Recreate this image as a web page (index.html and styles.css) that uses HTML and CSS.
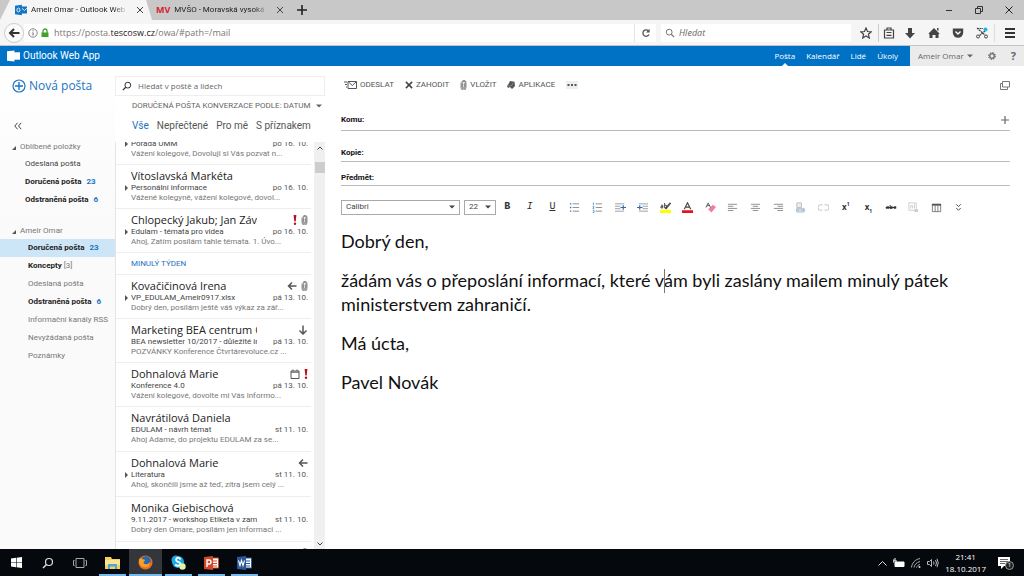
FILE: index.html
```html
<!DOCTYPE html>
<html lang="cs">
<head>
<meta charset="utf-8">
<title>Ameir Omar - Outlook Web App</title>
<link rel="stylesheet" href="styles.css">
</head>
<body>
<svg class="defs" aria-hidden="true">
  <symbol id="outlook" viewBox="0 0 14 12"><path d="M7 2h7v8H7z" fill="currentColor"/><path d="M8 4l3 2.500L14 4" class="cut" fill="none"/><path d="M0 1l8-1v12l-8-1z" fill="currentColor"/><ellipse cx="4" cy="6" rx="1.800" ry="2.300" class="cut" fill="none"/></symbol>
  <symbol id="clip" viewBox="0 0 8 12"><path d="M2 4v4.500a2 2 0 0 0 4 0V3a1.500 1.500 0 0 0-3 0v5.300a1 1 0 0 0 2 0V4M1 3v6a3 3 0 0 0 6 0V3a2.500 2.500 0 0 0-5 0" fill="none" stroke="currentColor" stroke-width=".8"/></symbol>
  <symbol id="reply" viewBox="0 0 10 10"><path d="M9.500 5H1.500M5 1.500L1.500 5 5 8.500" fill="none" stroke="currentColor" stroke-width="1.500"/></symbol>
  <symbol id="down" viewBox="0 0 10 10"><path d="M5 .5v8M1.500 5.500L5 9l3.500-3.500" fill="none" stroke="currentColor" stroke-width="1.500"/></symbol>
  <symbol id="bang" viewBox="0 0 4 10"><path d="M.6 0h2.800L2.700 6.500H1.300z" fill="#b8101c"/><circle cx="2" cy="8.700" r="1.200" fill="#b8101c"/></symbol>
  <symbol id="cal" viewBox="0 0 10 10"><path d="M1 2h8v7.500H1zM1 3.200h8M3 .5V2M7 .5V2" fill="none" stroke="currentColor"/></symbol>
  <symbol id="caret" viewBox="0 0 6 4"><path d="M0 .5h6L3 3.500z" fill="currentColor"/></symbol>
  <symbol id="lens" viewBox="0 0 12 12"><circle cx="7" cy="5" r="3.500" fill="none" stroke="currentColor" stroke-width="1.200"/><path d="M4.500 7.500L1 11" stroke="currentColor" stroke-width="1.500"/></symbol>
  <symbol id="close" viewBox="0 0 10 10"><path d="M2 2l6 6M8 2L2 8" stroke="currentColor" fill="none"/></symbol>
</svg>

<div class="tabs">
  <div class="tab tab--active">
    <svg class="tab-icon" width="12" height="12"><use href="#outlook"/></svg>
    <span class="tab-title">Ameir Omar - Outlook Web App</span>
    <button class="tab-close" aria-label="Zavřít panel"><svg width="10" height="10"><use href="#close"/></svg></button>
  </div>
  <div class="tab">
    <b class="mv">MV</b>
    <span class="tab-title">MVŠO - Moravská vysoká škola</span>
    <button class="tab-close" aria-label="Zavřít panel"><svg width="10" height="10"><use href="#close"/></svg></button>
  </div>
  <button class="new-tab" aria-label="Nový panel"><svg width="10" height="10" viewBox="0 0 10 10"><path d="M5 0v10M0 5h10" stroke="#222" stroke-width="1.600"/></svg></button>
  <div class="win">
    <button aria-label="Minimalizovat"><svg width="10" height="10" viewBox="0 0 10 10"><path d="M2 5.500h6" stroke="#333"/></svg></button>
    <button aria-label="Obnovit"><svg width="10" height="10" viewBox="0 0 10 10"><path d="M1.500 3.500h5v5h-5zM3.500 3.500v-2h5v5h-2" fill="none" stroke="#333"/></svg></button>
    <button aria-label="Zavřít"><svg width="10" height="10" viewBox="0 0 10 10"><path d="M1.500 1.500l7 7M8.500 1.500l-7 7" stroke="#222"/></svg></button>
  </div>
</div>

<div class="nav">
  <button class="back" aria-label="Zpět"><svg width="12" height="10" viewBox="0 0 12 10"><path d="M11.500 5H2M6 1L2 5l4 4" fill="none" stroke="#333" stroke-width="2"/></svg></button>
  <div class="address">
    <svg width="10" height="10" viewBox="0 0 10 10"><circle cx="5" cy="5" r="4.200" fill="none" stroke="#666" stroke-width=".8"/><path d="M5 4.300v3.200M5 2.300v1" stroke="#666"/></svg>
    <svg width="8" height="10" viewBox="0 0 8 10"><path d="M.5 4.500h7V9h-7z" fill="#3fa32a"/><path d="M2 5V3a2 2 0 0 1 4 0v2" fill="none" stroke="#3fa32a" stroke-width="1.300"/></svg>
    <span class="url">https://posta.<b>tescosw.cz</b>/owa/#path=/mail</span>
    <button class="reload" aria-label="Obnovit stránku"><svg width="10" height="10" viewBox="0 0 10 10"><path d="M8 6.500A3.200 3.200 0 1 1 7.500 3" fill="none" stroke="#555" stroke-width="1.300"/><path d="M8.600.8v3.600H5z" fill="#555"/></svg></button>
  </div>
  <label class="find"><svg class="flip" width="10" height="10"><use href="#lens"/></svg><input type="text" placeholder="Hledat" aria-label="Hledat na webu"></label>
  <div class="nav-tools">
    <button aria-label="Záložka"><svg width="12" height="12" viewBox="0 0 12 12"><path d="M6 1l1.500 3.500 3.700.3-2.800 2.500.9 3.700L6 9l-3.300 2 .9-3.700L.8 4.800l3.700-.3z" fill="none" stroke="#444" stroke-width="1.200"/></svg></button>
    <button class="ruled" aria-label="Seznam"><svg width="12" height="12" viewBox="0 0 12 12"><path d="M1.500 3h9v8h-9zM4 3V1h4v2M3.500 5.500h5M3.500 8.300h5" fill="none" stroke="#444" stroke-width="1.200"/></svg></button>
    <button aria-label="Stahování"><svg width="12" height="12" viewBox="0 0 12 12"><path d="M4 1h4v5h3l-5 5.500L1 6h3z" fill="#444"/></svg></button>
    <button aria-label="Domů"><svg width="12" height="12" viewBox="0 0 12 12"><path d="M6 1l5.500 5.500-1 1V11h-3V8h-3v3h-3V7.500l-1-1zM9 1h1.500v3L9 3z" fill="#444"/></svg></button>
    <button aria-label="Pocket"><svg width="12" height="12" viewBox="0 0 12 12"><path d="M.8 1.500h10.400v4a5.200 5.200 0 0 1-10.400 0z" fill="#444"/><path d="M3.500 4.500L6 7l2.500-2.500" fill="none" stroke="#fff" stroke-width="1.400"/></svg></button>
    <button aria-label="Výstřižek"><svg width="12" height="12" viewBox="0 0 12 12"><path d="M1 1.500h6M1 1l8 7M9 4L3 9" stroke="#444" stroke-width="1.200" stroke-dasharray="2 .6" fill="none"/><circle cx="2" cy="9.500" r="1.500" fill="none" stroke="#444"/><circle cx="10" cy="9.500" r="1.500" fill="none" stroke="#444"/><circle cx="9.500" cy="2.500" r="2" fill="#13bbe0"/></svg></button>
    <button class="menu" aria-label="Nabídka"><svg width="12" height="12" viewBox="0 0 12 12"><path d="M1 2h10M1 6h10M1 10h10" stroke="#333" stroke-width="2"/></svg></button>
  </div>
</div>

<header class="owa">
  <div class="brand"><svg width="13" height="12"><use href="#outlook"/></svg>Outlook Web App</div>
  <nav class="modules">
    <a href="#mail" class="current">Pošta</a><a href="#calendar">Kalendář</a><a href="#people">Lidé</a><a href="#tasks">Úkoly</a>
  </nav>
  <div class="account">
    <button>Ameir Omar <svg width="6" height="4"><use href="#caret"/></svg></button>
    <button aria-label="Nastavení"><svg width="10" height="10" viewBox="0 0 10 10"><circle cx="5" cy="5" r="2.300" fill="none" stroke="#666" stroke-width="1.300"/><circle cx="5" cy="5" r="3.500" fill="none" stroke="#666" stroke-width="1" stroke-dasharray="1.400 1.350"/></svg></button>
    <button class="help" aria-label="Nápověda">?</button>
  </div>
</header>

<main class="main">
  <aside class="side">
    <button class="new"><svg width="14" height="14" viewBox="0 0 14 14"><path d="M7 3v8M3 7h8" stroke="currentColor" stroke-width="1.400"/><circle cx="7" cy="7" r="6" fill="none" stroke="currentColor" stroke-width="1.200"/></svg>Nová pošta</button>
    <button class="collapse" aria-label="Sbalit"><svg width="8" height="8" viewBox="0 0 8 8"><path d="M3.500.8L.8 4l2.700 3.200M7.200.8L4.500 4l2.700 3.200" fill="none" stroke="#444"/></svg></button>
    <section class="folders">
      <h2>Oblíbené položky</h2>
      <a href="#sent" class="dark">Odeslaná pošta</a>
      <a href="#inbox" class="bold">Doručená pošta <i>23</i></a>
      <a href="#deleted" class="bold">Odstraněná pošta <i>6</i></a>
    </section>
    <section class="folders folders--own">
      <h2>Ameir Omar</h2>
      <a href="#inbox" class="bold selected">Doručená pošta <i>23</i></a>
      <a href="#drafts" class="bold">Koncepty <em>[3]</em></a>
      <a href="#sent">Odeslaná pošta</a>
      <a href="#deleted" class="bold">Odstraněná pošta <i>6</i></a>
      <a href="#rss">Informační kanály RSS</a>
      <a href="#junk">Nevyžádaná pošta</a>
      <a href="#notes">Poznámky</a>
    </section>
  </aside>

  <section class="list">
    <label class="search"><svg width="10" height="10"><use href="#lens"/></svg><input type="text" placeholder="Hledat v poště a lidech" aria-label="Hledat v poště a lidech"></label>
    <button class="sort">DORUČENÁ POŠTA KONVERZACE PODLE: DATUM <svg width="6" height="4"><use href="#caret"/></svg></button>
    <div class="filters"><button class="on">Vše</button><button>Nepřečtené</button><button>Pro mě</button><button>S příznakem</button></div>
    <div class="scroller">
      <div class="items">
        <article class="item item--first thread"><p class="subject">Porada ÚMM</p><time>po 16. 10.</time><p class="preview">Vážení kolegové, Dovoluji si Vás pozvat n...</p></article>
        <article class="item thread"><h3>Vítoslavská Markéta</h3><p class="subject">Personální informace</p><time>po 16. 10.</time><p class="preview">Vážené kolegyně, vážení kolegové, dovol...</p></article>
        <article class="item thread"><h3>Chlopecký Jakub; Jan Závodný</h3><span class="flags"><svg width="4" height="10"><use href="#bang"/></svg><svg width="7" height="10"><use href="#clip"/></svg></span><p class="subject">Edulam - témata pro videa</p><time>po 16. 10.</time><p class="preview">Ahoj, Zatím posílám tahle témata. 1. Úvo...</p></article>
        <h4 class="group">MINULÝ TÝDEN</h4>
        <article class="item thread"><h3>Kovačičinová Irena</h3><span class="flags"><svg width="10" height="10"><use href="#reply"/></svg><svg width="7" height="10"><use href="#clip"/></svg></span><p class="subject">VP_EDULAM_Ameir0917.xlsx</p><time>pá 13. 10.</time><p class="preview">Dobrý den, posílám ještě váš výkaz za zář...</p></article>
        <article class="item"><h3>Marketing BEA centrum Olomouc</h3><span class="flags"><svg width="10" height="10"><use href="#down"/></svg></span><p class="subject">BEA newsletter 10/2017 - důležité informace</p><time>pá 13. 10.</time><p class="preview">POZVÁNKY Konference Čtvrtárevoluce.cz ...</p></article>
        <article class="item"><h3>Dohnalová Marie</h3><span class="flags"><svg width="10" height="10"><use href="#cal"/></svg><svg width="4" height="10"><use href="#bang"/></svg></span><p class="subject">Konference 4.0</p><time>pá 13. 10.</time><p class="preview">Vážení kolegové, dovolte mi Vás informo...</p></article>
        <article class="item tall"><h3>Navrátilová Daniela</h3><p class="subject">EDULAM - návrh témat</p><time>st 11. 10.</time><p class="preview">Ahoj Adame, do projektu EDULAM za se...</p></article>
        <article class="item tall thread"><h3>Dohnalová Marie</h3><span class="flags"><svg width="10" height="10"><use href="#reply"/></svg></span><p class="subject">Literatura</p><time>st 11. 10.</time><p class="preview">Ahoj, skončili jsme až teď, zítra jsem celý ...</p></article>
        <article class="item tall"><h3>Monika Giebischová</h3><p class="subject">9.11.2017 - workshop Etiketa v zaměstnání</p><time>st 11. 10.</time><p class="preview">Dobrý den Omare, posílám jen informaci ...</p></article>
        <article class="item"><span class="flags"><svg width="10" height="10"><use href="#reply"/></svg><svg width="7" height="10"><use href="#clip"/></svg></span></article>
      </div>
      <div class="bar" aria-hidden="true"><svg width="6" height="4" viewBox="0 0 6 4"><path d="M.5 3.500L3 1l2.500 2.500" fill="none" stroke="#444"/></svg><span class="thumb"></span><svg class="bar-down" width="6" height="4" viewBox="0 0 6 4"><path d="M.5.5L3 3 5.500.5" fill="none" stroke="#444"/></svg></div>
    </div>
  </section>

  <section class="compose">
    <div class="actions">
      <button><svg width="13" height="10" viewBox="0 0 13 10"><path d="M4 1.500h8.500v7H4zM4.500 2l3.800 3.500L12 2M0 2h3M1 4.500h2M2 7h1" fill="none" stroke="#555"/></svg>ODESLAT</button>
      <button><svg width="8" height="8" viewBox="0 0 9 9"><path d="M1 1l7 7M8 1L1 8" stroke="#444" stroke-width="1.700"/></svg>ZAHODIT</button>
      <button><svg width="7" height="10"><use href="#clip"/></svg>VLOŽIT</button>
      <button><svg width="8" height="8" viewBox="0 0 8 8"><path d="M3 0l4.500.8L8 5 5 8 3 6 1 7 0 5l1.500-2z" fill="#555"/><path d="M1 5l4-.5L6 2" fill="none" stroke="#aaa" stroke-width=".5"/></svg>APLIKACE</button>
      <button class="more" aria-label="Více"><svg width="10" height="4" viewBox="0 0 10 4"><path d="M.5 1h2v2h-2zM4 1h2v2H4zM7.500 1h2v2h-2z" fill="#555"/></svg></button>
      <button class="popout" aria-label="Otevřít v novém okně"><svg width="10" height="9" viewBox="0 0 10 9"><path d="M2.500.5h7v5.500h-7zM2.500 2.500h-2v6h7V6" fill="none" stroke="#777"/></svg></button>
    </div>
    <div class="field field--to"><label for="to">Komu:</label><input id="to" type="text"><button aria-label="Přidat"><svg width="8" height="8" viewBox="0 0 8 8"><path d="M4 0v8M0 4h8" stroke="#666" stroke-width="1.200"/></svg></button></div>
    <div class="field field--cc"><label for="cc">Kopie:</label><input id="cc" type="text"></div>
    <div class="field field--subj"><label for="subj">Předmět:</label><input id="subj" type="text"></div>
    <div class="format">
      <span class="pick pick--font"><select aria-label="Písmo"><option>Calibri</option></select><svg width="6" height="4"><use href="#caret"/></svg></span>
      <span class="pick pick--size"><select aria-label="Velikost"><option>22</option></select><svg width="6" height="4"><use href="#caret"/></svg></span>
      <div class="tools">
        <button class="slab" aria-label="Tučné"><b>B</b></button>
        <button class="slab" aria-label="Kurzíva"><i>I</i></button>
        <button class="slab" aria-label="Podtržené"><u>U</u></button>
        <button aria-label="Odrážky"><svg viewBox="0 0 12 12"><path d="M4 2h7M4 6h7M4 10h7" stroke="#888"/><path d="M1 2h1.500M1 6h1.500M1 10h1.500" stroke="#2a7cc8" stroke-width="1.500"/></svg></button>
        <button aria-label="Číslování"><svg viewBox="0 0 12 12"><path d="M4 2h7M4 6h7M4 10h7" stroke="#888"/><path d="M1.500.5v3M.8 5h1.400L1 7h1.400M.8 9h1.400v2.500H.8" fill="none" stroke="#2a7cc8" stroke-width=".8"/></svg></button>
        <button aria-label="Zmenšit odsazení"><svg viewBox="0 0 12 12"><path d="M0 2h10M0 4.600h6M0 7.300h6M0 10h10" stroke="#999"/><path d="M6 6h6M9 3.500v5" fill="none" stroke="#2a6cb0" stroke-width="1.300"/></svg></button>
        <button aria-label="Zvětšit odsazení"><svg viewBox="0 0 12 12"><path d="M2 2h10M6 4.600h6M6 7.300h6M2 10h10" stroke="#999"/><path d="M0 6h6M3 3.500v5" fill="none" stroke="#2a6cb0" stroke-width="1.300"/></svg></button>
        <button aria-label="Zvýraznění"><svg viewBox="0 0 12 12"><path d="M0 8.500h12V12H0z" fill="#ff0"/><path d="M11.500 1L6 7.500" stroke="#555" stroke-width="2"/><path d="M1 3.500h2v3H1V5h2M5 1v5.500h2v-3H5" fill="none" stroke="#333" stroke-width=".9"/></svg></button>
        <button aria-label="Barva písma"><svg viewBox="0 0 12 12"><path d="M0 9h12v3H0z" fill="#e8121c"/><path d="M2.500 8L6 .8 9.500 8M4 5.600h4" fill="none" stroke="#444" stroke-width="1.200"/></svg></button>
        <button aria-label="Vymazat formát"><svg viewBox="0 0 12 12"><path d="M3.500 8L8.500 3l3.500 2.500L7 11.500z" fill="#ef7f9b"/><path d="M1 6l2.500-5L6 6M2 4h3" fill="none" stroke="#555"/></svg></button>
        <button aria-label="Vlevo"><svg viewBox="0 0 12 12"><path d="M1 2.500h10M1 4.700h6M1 7h10M1 9.300h6" stroke="#888"/></svg></button>
        <button aria-label="Na střed"><svg viewBox="0 0 12 12"><path d="M1 2.500h10M3 4.700h6M1 7h10M3 9.300h6" stroke="#888"/></svg></button>
        <button aria-label="Vpravo"><svg viewBox="0 0 12 12"><path d="M1 2.500h10M5 4.700h6M1 7h10M5 9.300h6" stroke="#888"/></svg></button>
        <button aria-label="Vložit odkaz"><svg viewBox="0 0 12 12"><path d="M2 1h5v5H2zM2 7h8v4H2z" fill="#eee" stroke="#bbb"/><path d="M1 9h4M6 9h5" stroke="#a5c5e4" stroke-width="2"/></svg></button>
        <button aria-label="Odebrat odkaz"><svg viewBox="0 0 12 12"><path d="M5 3H3a3 3 0 0 0 0 6h2M7 3h2a3 3 0 0 1 0 6H7" fill="none" stroke="#ccc" stroke-width="1.200"/></svg></button>
        <button class="mark" aria-label="Horní index"><span>x<sup>1</sup></span></button>
        <button class="mark" aria-label="Dolní index"><span>x<sub>1</sub></span></button>
        <button class="mark" aria-label="Přeškrtnuté"><s>abc</s></button>
        <button aria-label="Obrázek"><svg viewBox="0 0 12 12"><path d="M1 1h8v8H1zM3 7V4h2v3M7 2v5" fill="none" stroke="#ccc"/><path d="M7 8h4v3H7z" fill="#ccc"/></svg></button>
        <button aria-label="Tabulka"><svg viewBox="0 0 12 12"><path d="M1.500 2.500h9v8h-9zM4.500 4v6.500M7.500 4v6.500" fill="none" stroke="#777"/><path d="M1 2h10v2H1z" fill="#555"/></svg></button>
        <button aria-label="Další"><svg viewBox="0 0 12 12"><path d="M3.500 2.500L6 5l2.500-2.500M3.500 6.500L6 9l2.500-2.500" fill="none" stroke="#444"/></svg></button>
      </div>
    </div>
    <div class="body" role="textbox" aria-multiline="true" aria-label="Text zprávy" contenteditable="true" spellcheck="false">
      <p>Dobrý den,</p>
      <p>žádám vás o přeposlání informací, které v<span class="cursor"></span>ám byli zaslány mailem minulý pátek ministerstvem zahraničí.</p>
      <p>Má úcta,</p>
      <p>Pavel Novák</p>
    </div>
  </section>
</main>

<footer class="taskbar">
  <button aria-label="Start"><svg width="11" height="11" viewBox="0 0 11 11"><path d="M0 1.500L5 .8v4.400H0zM5.600.7L11 0v5.200H5.600zM0 5.800h5v4.400l-5-.7zM5.600 5.800H11V11l-5.400-.7z" fill="#fff"/></svg></button>
  <button aria-label="Hledat"><svg width="12" height="12" color="#ddd"><use href="#lens"/></svg></button>
  <button aria-label="Zobrazení úloh"><svg width="14" height="12" viewBox="0 0 14 12"><path d="M3 1.500h8v9H3zM1.500 3.500h-1v5h1M12.500 3.500h1v5h-1" fill="none" stroke="#aaa"/></svg></button>
  <button class="open" aria-label="Průzkumník"><svg width="15" height="14" viewBox="0 0 15 14"><path d="M0 1h6l1 2h8v10H0z" fill="#f5cf62"/><path d="M0 4h15v5H0z" fill="#fbe394"/><path d="M3 13V8h9v5h-2v-2.500H5V13z" fill="#48a8dc"/></svg></button>
  <button class="open active" aria-label="Firefox"><svg width="15" height="15" viewBox="0 0 15 15"><circle cx="7.500" cy="7.500" r="7" fill="#e8701c"/><circle cx="8" cy="6" r="4.800" fill="#2768b0"/><path d="M1 4c2-2 3 0 5 .5C8 5 6 6.500 5.500 7.500 6 10 10 10 12 7c0 5-4 6-7 5S1 8 1 4z" fill="#f6a024"/></svg></button>
  <button class="open" aria-label="Skype"><svg width="15" height="15" viewBox="0 0 15 15"><circle cx="5" cy="5" r="4.500" fill="#18a8e8"/><circle cx="7" cy="7" r="6" fill="#18a8e8"/><path d="M9.500 4.500C7-.2 2.500 5.500 7 6.800c5.500 1.500.5 5.800-2.800 2.700" fill="none" stroke="#fff" stroke-width="1.800"/><circle cx="11.500" cy="11.500" r="3.200" fill="#e4f2a4"/></svg></button>
  <button class="open" aria-label="PowerPoint"><svg width="15" height="14" viewBox="0 0 15 14"><path d="M7 2h7.500v10H7z" fill="#fff" stroke="#d24726"/><path d="M9 5h4M9 7.500h4M9 10h4" stroke="#d24726"/><path d="M0 1l9-1v14l-9-1z" fill="#d24726"/><path d="M3 11V4h2a2 2 0 0 1 0 4H3" fill="none" stroke="#fff" stroke-width="1.400"/></svg></button>
  <button class="open" aria-label="Word"><svg width="15" height="14" viewBox="0 0 15 14"><path d="M7 2h7.500v10H7z" fill="#fff" stroke="#2b579a"/><path d="M9 5h4M9 7.500h4M9 10h4" stroke="#2b579a"/><path d="M0 1l9-1v14l-9-1z" fill="#2b579a"/><path d="M1.500 4.500l1.500 5 1.500-5 1.500 5 1.500-5" fill="none" stroke="#fff" stroke-width="1.100"/></svg></button>
  <div class="tray">
    <svg width="9" height="6" viewBox="0 0 9 6"><path d="M.5 5.500l4-4 4 4" fill="none" stroke="#ddd"/></svg>
    <svg width="12" height="10" viewBox="0 0 12 10"><path d="M2 4h9v4.500H2zM0 1v4M2 0v3M0 3h4" fill="#fff" stroke="#fff"/></svg>
    <svg width="10" height="10" viewBox="0 0 10 10"><path d="M.5 9.500C1 5 4 1.500 9 .5M3 9.500C3.500 6.500 5.500 4.500 9 3.500M5.500 9.500C6 8 7 7 9 6.500" fill="none" stroke="#aaa"/><circle cx="8.500" cy="9" r="1" fill="#ddd"/></svg>
    <svg width="12" height="10" viewBox="0 0 12 10"><path d="M.5 3.500h2l2-2v7l-2-2h-2zM6.500 3.500q1 1.500 0 3M8.500 2q2 3 0 6M10 .8q2.500 4.200 0 8.400" fill="none" stroke="#ccc" stroke-width=".9"/></svg>
    <div class="clock"><span>21:41</span><span>18.10.2017</span></div>
    <div class="notice"><svg width="13" height="12" viewBox="0 0 13 12"><path d="M0 0h12v9H6l-3 3V9H0z" fill="#fff"/><path d="M2 2.500h8M2 4.500h8M2 6.500h5" stroke="#444" stroke-width=".8"/></svg><span class="badge">1</span></div>
  </div>
</footer>
</body>
</html>
```
FILE: styles.css
```css
* { box-sizing: border-box; }
body { margin: 0; height: 100vh; display: flex; flex-direction: column; overflow: hidden; background: #fff; color: #333; font: 8px/12px Roboto, "Open Sans", sans-serif; }
button, input, select { font: inherit; color: inherit; background: none; border: 0; padding: 0; margin: 0; min-width: 0; outline: 0; }
button { display: inline-flex; align-items: center; justify-content: center; white-space: nowrap; }
a { color: inherit; text-decoration: none; }
h2, h3, h4, p { margin: 0; font-weight: 400; }
svg { flex: none; display: block; }
.defs { position: absolute; width: 0; height: 0; }

.tabs { display: flex; align-items: center; height: 20px; flex: none; background: #c8c8c8; color: #222; }
.tab { display: flex; align-items: center; height: 20px; width: 140px; padding-left: 4px; }
.tab--active { width: 152px; padding-left: 15px; background: #f5f5f5; clip-path: polygon(10px 0, 146px 0, 152px 100%, 0 100%); }
.tab-icon { color: #1474c4; margin-right: 4px; }
.cut { stroke: #fff; stroke-width: 1; }
.brand .cut { stroke: #0072c6; }
.tab-title { flex: 1; overflow: hidden; white-space: nowrap; mask-image: linear-gradient(to right, #000 85%, transparent); }
.tab-close { width: 24px; color: #444; }
.mv { color: #d8222e; font: 700 9px/12px "Open Sans", sans-serif; margin-right: 4px; }
.new-tab { width: 20px; height: 20px; }
.win { margin-left: auto; display: flex; }
.win button { width: 30px; height: 20px; }

.nav { display: flex; align-items: center; height: 26px; flex: none; background: #f5f5f5; border-bottom: 1px solid #c4c4c4; padding-left: 4px; }
.back { width: 20px; height: 20px; border: 1px solid #ccc; border-radius: 50%; background: #fbfbfb; }
.address { flex: 1; display: flex; align-items: center; gap: 3px; height: 18px; padding-left: 4px; background: #fff; }
.url { font: 9px/12px "Open Sans", sans-serif; color: #777; margin-left: 2px; }
.url b { color: #222; font-weight: 500; }
.reload { margin-left: auto; width: 22px; height: 18px; border-left: 1px solid #e4e4e4; }
.find { display: flex; align-items: center; gap: 4px; width: 190px; height: 18px; margin-left: 5px; padding-left: 4px; background: #fff; color: #777; }
.find input { flex: 1; font: italic 9px/12px "Open Sans", sans-serif; }
.find input::placeholder, .search input::placeholder { color: #666; opacity: 1; }
.flip { transform: scaleX(-1); }
.nav-tools { display: flex; padding-left: 3px; }
.nav-tools button { width: 24px; height: 18px; }
.nav-tools .ruled { width: 20px; border-left: 1px solid #ccc; }
.nav-tools .menu { width: 30px; border-left: 1px solid #ddd; }

.owa { display: flex; align-items: stretch; height: 20px; flex: none; background: #0072c6; color: #fff; font-family: "Open Sans", sans-serif; }
.brand { display: flex; align-items: center; gap: 3px; padding-left: 7px; font: 10px/12px Roboto, sans-serif; }
.modules { margin-left: auto; display: flex; align-items: center; gap: 11px; padding-right: 12px; }
.current { position: relative; }
.current::after { content: ""; position: absolute; left: 50%; bottom: -4px; margin-left: -3px; border: 3px solid transparent; border-top: 0; border-bottom-color: #fff; }
.account { display: flex; align-items: center; gap: 14px; width: 114px; padding-left: 8px; background: #ebebeb; color: #666; }
.account button { gap: 3px; }
.account .help { font-size: 11px; font-weight: 700; }

.main { flex: 1; min-height: 0; display: flex; }
.side { width: 115px; flex: none; background: linear-gradient(#fff, #fafafa 150px); padding-top: 10px; }
.new { gap: 3px; height: 20px; margin-left: 12px; font: 12px/20px "Open Sans", sans-serif; color: #1b74c0; }
.collapse { display: flex; width: 10px; height: 10px; margin: 24px 0 7px 13px; }
.folders h2 { position: relative; padding-left: 20px; font-size: 8px; line-height: 17px; color: #777; }
.folders h2::before { content: ""; position: absolute; left: 12px; top: 8px; border-left: 4px solid transparent; border-bottom: 4px solid #555; }
.folders a { display: block; height: 18px; line-height: 18px; padding-left: 25px; white-space: nowrap; color: #777; }
.folders--own { margin-top: 13px; }
.folders--own a { padding-left: 28px; }
.folders .dark { color: #444; }
.folders .bold { color: #222; font-weight: 700; }
.folders .selected { background: #cde6f7; }
.folders i { font-style: normal; color: #1b74c0; margin-left: 3px; }
.folders em { font-style: normal; font-weight: 400; color: #777; }

.list { width: 210px; flex: none; display: flex; flex-direction: column; padding-top: 10px; }
.search { display: flex; align-items: center; gap: 6px; height: 20px; padding-left: 6px; border: 1px solid #eee; }
.search input { flex: 1; font: 8px/12px "Open Sans", sans-serif; }
.sort { height: 20px; gap: 6px; justify-content: flex-start; padding-left: 17px; color: #666; }
.filters { display: flex; gap: 8px; height: 26px; padding: 0 0 6px 17px; font-size: 10px; color: #555; align-items: center; white-space: nowrap; }
.filters .on { color: #1b74c0; }
.scroller { flex: 1; min-height: 0; display: flex; border-left: 1px solid #e4e4e4; }
.items { flex: 1; min-width: 0; overflow: hidden; }
.item { display: grid; grid-template-columns: 126px 1fr; grid-template-rows: 14px 10px 10px; height: 44px; margin-right: 3px; padding: 4px 3px 5px 15px; border-bottom: 1px solid #eee; align-items: center; position: relative; }
.item--first { margin-top: -21px; }
.tall { height: 45px; }
.item h3 { grid-area: 1 / 1; font: 11px/14px "Open Sans", sans-serif; color: #222; white-space: nowrap; overflow: hidden; }
.item p { line-height: 10px; white-space: nowrap; overflow: hidden; }
.item .subject { grid-area: 2 / 1; color: #444; }
.item time { grid-area: 2 / 2; justify-self: end; line-height: 10px; color: #555; white-space: nowrap; }
.item .preview { grid-area: 3 / 1 / 4 / 3; color: #777; }
.flags { grid-area: 1 / 2; justify-self: end; display: flex; align-items: center; gap: 4px; color: #555; }
.thread::before { content: ""; position: absolute; left: 9px; top: 20px; border: 3px solid transparent; border-left: 3px solid #555; border-right: 0; }
.group { height: 22px; line-height: 21px; padding-left: 15px; margin-right: 3px; border-bottom: 1px solid #eee; font-size: 8px; color: #1b74c0; }
.bar { width: 11px; flex: none; display: flex; flex-direction: column; align-items: center; background: #f0f0f0; padding: 4px 0 3px; }
.thumb { width: 10px; height: 11px; margin-top: 12px; background: #cdcdcd; }
.bar-down { margin-top: auto; }

.compose { flex: 1; min-width: 0; padding: 10px 14px 0 16px; }
.actions { display: flex; align-items: center; gap: 11px; height: 18px; padding-left: 3px; color: #555; }
.actions button { gap: 3px; }
.actions .more { background: #eee; height: 8px; width: 12px; }
.actions .popout { margin-left: auto; }
.field { display: flex; align-items: center; border-bottom: 1px solid #bbb; color: #111; }
.field label { font-weight: 700; }
.field input { flex: 1; }
.field button { margin-right: 1px; }
.field--to { height: 21px; margin-top: 16px; }
.field--cc { height: 18px; margin-top: 13px; }
.field--subj { height: 16px; margin-top: 8px; }
.format { display: flex; align-items: center; height: 16px; margin-top: 13px; }
.pick { display: flex; align-items: center; height: 15px; padding: 0 4px; border: 1px solid #aaa; color: #444; }
.pick select { flex: 1; appearance: none; }
.pick--font { width: 119px; margin-right: 4px; }
.pick--size { width: 32px; }
.tools { flex: 1; max-width: 474px; display: grid; grid-template-columns: repeat(21, 1fr); }
.tools svg { width: 11px; height: 11px; }
.slab { font: 10px/12px "Liberation Mono", monospace; color: #333; }
.mark { font: 700 8px/12px "Open Sans", sans-serif; color: #333; }
.mark sup, .mark sub { font-size: 5px; line-height: 0; }
.mark s { font-size: 6px; }
.body { padding-top: 14px; font: 18px/24px Lato, "Open Sans", sans-serif; color: #111; outline: 0; }
.body p { margin-bottom: 15px; }
.cursor { position: relative; }
.cursor::after { content: ""; position: absolute; left: 0; top: 0; width: 1px; height: 24px; background: #777; }

.taskbar { display: flex; height: 27px; flex: none; background: #05080c; color: #fff; font-family: "Open Sans", sans-serif; }
.taskbar > button { width: 32px; }
.taskbar > .open { width: 33px; box-shadow: inset 3px 0 #05080c, inset -3px 0 #05080c, inset 0 -2px #76b9ed; }
.taskbar > .active { background: #33373b; box-shadow: inset 0 -2px #76b9ed; }
.tray { margin-left: auto; display: flex; align-items: center; gap: 6px; padding-right: 13px; }
.clock { display: flex; flex-direction: column; align-items: center; font-size: 8px; line-height: 12px; }
.notice { position: relative; margin-left: 6px; }
.badge { position: absolute; left: 7px; top: 4px; width: 9px; height: 9px; border: 1px solid #999; border-radius: 50%; background: #222; font-size: 6px; line-height: 7px; text-align: center; }
```
